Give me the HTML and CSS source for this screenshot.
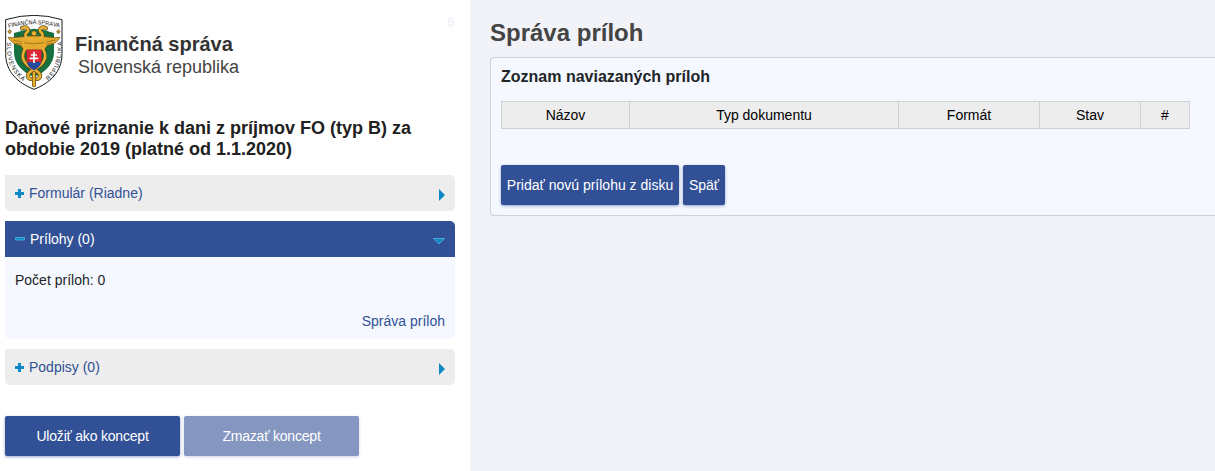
FILE: index.html
```html
<!DOCTYPE html>
<html lang="sk">
<head>
<meta charset="utf-8">
<title>Správa príloh</title>
<link rel="stylesheet" href="styles.css">
</head>
<body>
<div class="page">
  <aside class="sidebar">
    <span class="counter">6</span>
    <header class="brand">
      <svg class="emblem" viewBox="15 21 174 225">
        <path d="M17 35Q61 22 102 22Q143 22 186 35V137C186 192 150 225 102 244C54 225 17 192 17 137Z" fill="#fff" stroke="#171c19" stroke-width="3"/>
        <path d="M42 75Q73 65 102 62Q133 65 162 75V133C162 167 139 190 102 208C65 190 42 167 42 133Z" fill="#16703f"/>
        <g fill="none" stroke="#5d4310" stroke-width="12" stroke-linecap="round">
          <path d="M66 61C80 53 90 66 81 73C70 82 78 93 102 93M138 61C124 53 114 66 123 73C134 82 126 93 102 93"/>
          <path d="M76 121C60 147 70 168 102 184C123 195 126 208 112 213M128 121C144 147 134 168 102 184C81 195 78 208 92 213"/>
          <path d="M102 195V232"/>
        </g>
        <path d="M24 88C43 91 54 86 70 86Q102 80 134 86C150 86 161 91 180 88C173 101 158 112 143 112L130 128H74L61 112C47 112 31 101 24 88Z" fill="#e5a92d" stroke="#6b4a0c" stroke-width="2"/>
        <path d="M38 96L65 102M46 106L66 108M166 96L139 102M158 106L138 108M72 104Q102 111 132 104" fill="none" stroke="#84601a" stroke-width="2"/>
        <g fill="none" stroke="#e8b136" stroke-width="8" stroke-linecap="round">
          <path d="M66 61C80 53 90 66 81 73C70 82 78 93 102 93M138 61C124 53 114 66 123 73C134 82 126 93 102 93"/>
          <path d="M76 121C60 147 70 168 102 184C123 195 126 208 112 213M128 121C144 147 134 168 102 184C81 195 78 208 92 213"/>
          <path d="M102 195V232"/>
        </g>
        <circle cx="102" cy="76" r="8" fill="#e8b136" stroke="#4a3a12" stroke-width="2"/>
        <path d="M80 125H125V157Q122 177 102 186Q82 177 80 157Z" fill="#de2733" stroke="#5b1d32"/>
        <path d="M82 165Q91 157 102 165Q113 157 123 165Q119 179 102 186Q85 179 82 165Z" fill="#244c9c"/>
        <path d="M102 131V165M93 141H111M89 151H115" stroke="#fff" stroke-width="5"/>
        <path d="M29 64l6 7-6 7-6-7zM175 64l6 7-6 7-6-7z" fill="#b98d35" stroke="#44391a"/>
        <path id="arc-top" d="M26 60Q102 38 184 60" fill="none"/>
        <path id="arc-left" d="M21 103C18 154 34 197 74 223" fill="none"/>
        <path id="arc-right" d="M144 218C173 197 187 158 185 97" fill="none"/>
        <g class="emblem-text">
          <text><textPath href="#arc-top" textLength="154" lengthAdjust="spacingAndGlyphs">FINANČNÁ SPRÁVA</textPath></text>
          <text><textPath href="#arc-left" textLength="132">SLOVENSKÁ</textPath></text>
          <text><textPath href="#arc-right" textLength="129">REPUBLIKA</textPath></text>
        </g>
      </svg>
      <div class="brand-text">
        <div class="brand-name">Finančná správa</div>
        <div class="brand-country">Slovenská republika</div>
      </div>
    </header>
    <h1 class="form-title">Daňové priznanie k dani z príjmov FO (typ B) za obdobie 2019 (platné od 1.1.2020)</h1>
    <section class="accordion">
      <div class="row">
        <svg class="plus" viewBox="0 0 9 9"><path d="M4.5 0V9M0 4.5H9" stroke="#0e88c6" stroke-width="3"/></svg>
        <span>Formulár (Riadne)</span>
        <svg class="arrow" viewBox="0 0 6 12"><path d="M0 0L6 6L0 12Z" fill="#0e88c6"/></svg>
      </div>
      <div class="open-item">
        <div class="row row-active">
          <svg class="minus" viewBox="0 0 10 4"><path d="M.5.5H9.5V3H.5Z" fill="#0e88c6" stroke="#55b5e0" stroke-width=".8"/></svg>
          <span>Prílohy (0)</span>
          <svg class="arrow-down" viewBox="0 0 12 7"><path d="M.5.5H11.5L6 6Z" fill="#0e88c6" stroke="#5ab6df" stroke-width=".8"/></svg>
        </div>
        <div class="row-body">
          <span>Počet príloh: 0</span>
          <a class="manage">Správa príloh</a>
        </div>
      </div>
      <div class="row">
        <svg class="plus" viewBox="0 0 9 9"><path d="M4.5 0V9M0 4.5H9" stroke="#0e88c6" stroke-width="3"/></svg>
        <span>Podpisy (0)</span>
        <svg class="arrow" viewBox="0 0 6 12"><path d="M0 0L6 6L0 12Z" fill="#0e88c6"/></svg>
      </div>
    </section>
    <div class="actions">
      <button class="btn btn-wide">Uložiť ako koncept</button>
      <button class="btn btn-wide btn-disabled">Zmazať koncept</button>
    </div>
  </aside>
  <main class="content">
    <h2 class="content-title">Správa príloh</h2>
    <section class="panel">
      <h3 class="panel-title">Zoznam naviazaných príloh</h3>
      <div class="table-head">
        <span>Názov</span><span>Typ dokumentu</span><span>Formát</span><span>Stav</span><span>#</span>
      </div>
      <div class="actions">
        <button class="btn btn-add">Pridať novú prílohu z disku</button>
        <button class="btn btn-back">Späť</button>
      </div>
    </section>
  </main>
</div>
</body>
</html>
```
FILE: styles.css
```css
* { box-sizing: border-box; }
body { margin: 0; font: 14px/20px "Liberation Sans", Arial, sans-serif; color: #212529; }
h1, h2, h3 { margin: 0; }
.page { display: flex; width: 1215px; height: 471px; overflow: hidden; }
.sidebar { position: relative; width: 470px; flex: none; padding: 15px 15px 0 5px; background: #fff; }
.counter { position: absolute; left: 447px; top: 12px; font-size: 14px; font-weight: bold; color: #f2f3f9; }
.brand { display: flex; height: 75px; }
.emblem { width: 58px; height: 75px; flex: none; }
.emblem-text { font: 18px "Liberation Sans", Arial, sans-serif; fill: #111; }
.brand-text { padding: 17px 0 0 12px; color: #333; }
.brand-name { font-size: 20px; line-height: 24px; font-weight: bold; }
.brand-country { padding-left: 3px; font-size: 18px; line-height: 22px; color: #444; }
.form-title { margin-top: 28px; font-size: 18px; line-height: 21px; color: #212121; }
.accordion { display: flex; flex-direction: column; gap: 10px; margin-top: 15px; }
.row { display: flex; align-items: center; height: 36px; padding: 0 10px; border-radius: 0 5px 5px 5px; background: #ededed; color: #315096; }
.row-active { background: #315096; color: #fff; border-radius: 0 5px 0 0; }
.plus { width: 9px; height: 9px; margin: 1px 5px 0 0; }
.minus { width: 10px; height: 4px; margin-right: 5px; }
.arrow { width: 6px; height: 12px; margin: 4px 0 0 auto; }
.arrow-down { width: 12px; height: 7px; margin: 4px 0 0 auto; }
.row-body { display: flex; flex-direction: column; height: 82px; padding: 13px 10px 8px; justify-content: space-between; background: #f5f8ff; border-radius: 0 0 5px 5px; }
.manage { align-self: flex-end; color: #315096; }
.actions { display: flex; gap: 4px; }
.sidebar .actions { margin-top: 31px; }
.btn { height: 40px; padding: 0; border: 0; border-radius: 2px; background: #315096; color: #fff; font: 14px "Liberation Sans", Arial, sans-serif; box-shadow: 0 1px 3px rgba(49, 80, 150, .5); white-space: nowrap; }
.btn-wide { width: 175px; letter-spacing: -.2px; }
.btn-disabled { background: #8596c0; box-shadow: 0 1px 3px rgba(49, 80, 150, .25); }
.btn-add { width: 178px; }
.btn-back { width: 42px; }
.content { flex: 1; min-width: 0; padding: 19px 0 0 20px; background: #f2f3f8; }
.content-title { font-size: 24px; line-height: 28px; color: #444; }
.panel { height: 159px; margin-top: 10px; padding: 8px 10px; border: 1px solid #cfd1d6; border-right: 0; border-radius: 4px 0 0 4px; background: #f5f8ff; }
.panel-title { font-size: 16px; line-height: 21px; color: #212529; }
.table-head { display: grid; grid-template-columns: 128px 269px 141px 101px 50px; width: 689px; height: 28px; margin-top: 14px; border: 1px solid #cfd1d6; border-width: 1px 0 1px 0; background: #ededed; color: #000; text-align: center; line-height: 26px; }
.table-head span { border-left: 1px solid #cfd1d6; }
.table-head span:last-child { border-right: 1px solid #cfd1d6; }
.panel .actions { margin-top: 36px; }
```
